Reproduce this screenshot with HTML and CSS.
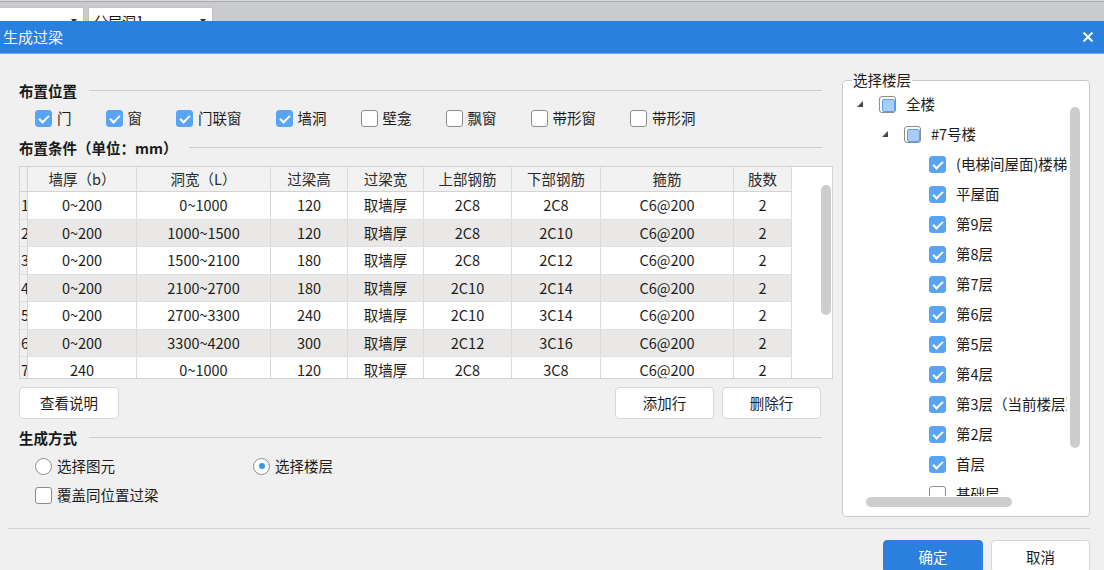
FILE: index.html
```html
<!DOCTYPE html>
<html lang="zh-CN">
<head>
<meta charset="utf-8">
<title>生成过梁</title>
<link rel="stylesheet" href="styles.css">
</head>
<body>
<div class="screen">
  <div class="topstrip">
    <div class="combo combo-a"><span class="combo-text"></span><span class="arrow"></span></div>
    <div class="combo combo-b"><span class="combo-text">分层洞1</span><span class="arrow"></span></div>
  </div>

  <div class="titlebar">
    <span class="title">生成过梁</span>
    <svg class="close" width="12" height="12" viewBox="0 0 12 12"><path d="M1.5 1.5L10.5 10.5M10.5 1.5L1.5 10.5" stroke="#fff" stroke-width="2" fill="none"/></svg>
  </div>

  <div class="content">
    <div class="left">
      <div class="section-head"><span class="section-title">布置位置</span><span class="rule"></span></div>
      <div class="check-row">
        <label class="opt"><span class="box checked"></span>门</label>
        <label class="opt"><span class="box checked"></span>窗</label>
        <label class="opt"><span class="box checked"></span>门联窗</label>
        <label class="opt"><span class="box checked"></span>墙洞</label>
        <label class="opt"><span class="box"></span>壁龛</label>
        <label class="opt"><span class="box"></span>飘窗</label>
        <label class="opt"><span class="box"></span>带形窗</label>
        <label class="opt"><span class="box"></span>带形洞</label>
      </div>

      <div class="section-head head-cond"><span class="section-title">布置条件（单位：mm）</span><span class="rule"></span></div>

      <div class="grid">
        <table class="data">
          <colgroup>
            <col class="c-num"><col class="c-b"><col class="c-l"><col class="c-h"><col class="c-w"><col class="c-top"><col class="c-bot"><col class="c-stir"><col class="c-legs">
          </colgroup>
          <thead>
            <tr><th class="num"></th><th>墙厚（b）</th><th>洞宽（L）</th><th>过梁高</th><th>过梁宽</th><th>上部钢筋</th><th>下部钢筋</th><th>箍筋</th><th>肢数</th></tr>
          </thead>
          <tbody>
            <tr><td class="num">1</td><td>0~200</td><td>0~1000</td><td>120</td><td>取墙厚</td><td>2C8</td><td>2C8</td><td>C6@200</td><td>2</td></tr>
            <tr class="alt"><td class="num">2</td><td>0~200</td><td>1000~1500</td><td>120</td><td>取墙厚</td><td>2C8</td><td>2C10</td><td>C6@200</td><td>2</td></tr>
            <tr><td class="num">3</td><td>0~200</td><td>1500~2100</td><td>180</td><td>取墙厚</td><td>2C8</td><td>2C12</td><td>C6@200</td><td>2</td></tr>
            <tr class="alt"><td class="num">4</td><td>0~200</td><td>2100~2700</td><td>180</td><td>取墙厚</td><td>2C10</td><td>2C14</td><td>C6@200</td><td>2</td></tr>
            <tr><td class="num">5</td><td>0~200</td><td>2700~3300</td><td>240</td><td>取墙厚</td><td>2C10</td><td>3C14</td><td>C6@200</td><td>2</td></tr>
            <tr class="alt"><td class="num">6</td><td>0~200</td><td>3300~4200</td><td>300</td><td>取墙厚</td><td>2C12</td><td>3C16</td><td>C6@200</td><td>2</td></tr>
            <tr><td class="num">7</td><td>240</td><td>0~1000</td><td>120</td><td>取墙厚</td><td>2C8</td><td>3C8</td><td>C6@200</td><td>2</td></tr>
          </tbody>
        </table>
        <div class="grid-side"><div class="vthumb"></div></div>
      </div>

      <div class="btn-row">
        <button class="btn">查看说明</button>
        <span class="spacer"></span>
        <button class="btn">添加行</button>
        <button class="btn">删除行</button>
      </div>

      <div class="section-head head-gen"><span class="section-title">生成方式</span><span class="rule"></span></div>
      <div class="radio-row">
        <label class="opt"><span class="radio"></span>选择图元</label>
        <label class="opt"><span class="radio on"></span>选择楼层</label>
      </div>
      <div class="over-row">
        <label class="opt"><span class="box"></span>覆盖同位置过梁</label>
      </div>
    </div>

    <fieldset class="floors">
      <legend>选择楼层</legend>
      <div class="tree-view">
        <ul class="tree-list">
          <li class="node lv0"><span class="twisty"></span><span class="box partial"></span><span class="node-text">全楼</span></li>
          <li class="node lv1"><span class="twisty"></span><span class="box partial"></span><span class="node-text">#7号楼</span></li>
          <li class="node lv2"><span class="twisty none"></span><span class="box checked"></span><span class="node-text">(电梯间屋面)楼梯</span></li>
          <li class="node lv2"><span class="twisty none"></span><span class="box checked"></span><span class="node-text">平屋面</span></li>
          <li class="node lv2"><span class="twisty none"></span><span class="box checked"></span><span class="node-text">第9层</span></li>
          <li class="node lv2"><span class="twisty none"></span><span class="box checked"></span><span class="node-text">第8层</span></li>
          <li class="node lv2"><span class="twisty none"></span><span class="box checked"></span><span class="node-text">第7层</span></li>
          <li class="node lv2"><span class="twisty none"></span><span class="box checked"></span><span class="node-text">第6层</span></li>
          <li class="node lv2"><span class="twisty none"></span><span class="box checked"></span><span class="node-text">第5层</span></li>
          <li class="node lv2"><span class="twisty none"></span><span class="box checked"></span><span class="node-text">第4层</span></li>
          <li class="node lv2"><span class="twisty none"></span><span class="box checked"></span><span class="node-text">第3层（当前楼层）</span></li>
          <li class="node lv2"><span class="twisty none"></span><span class="box checked"></span><span class="node-text">第2层</span></li>
          <li class="node lv2"><span class="twisty none"></span><span class="box checked"></span><span class="node-text">首层</span></li>
          <li class="node lv2"><span class="twisty none"></span><span class="box"></span><span class="node-text">基础层</span></li>
        </ul>
        <div class="vbar"></div>
        <div class="hbar"></div>
      </div>
    </fieldset>
  </div>

  <div class="footer">
    <button class="btn primary">确定</button>
    <button class="btn">取消</button>
  </div>
</div>
</body>
</html>
```

FILE: styles.css
```css
* { box-sizing: border-box; }

html, body {
  margin: 0;
  padding: 0;
}

body {
  width: 1104px;
  height: 570px;
  overflow: hidden;
  background: #f0f0f0;
  font-family: "Noto Sans CJK SC", "Noto Sans", sans-serif;
  font-size: 14.5px;
  color: #1c1c1c;
}

.screen {
  width: 1104px;
  height: 570px;
  display: flex;
  flex-direction: column;
  overflow: hidden;
}

/* ---------- top strip (app behind the dialog) ---------- */
.topstrip {
  height: 21px;
  flex: none;
  background: #c9cbce;
  border-top: 1px solid #dcdcdc;
  box-shadow: inset 0 1px 0 #a6a8ab;
  display: flex;
  gap: 4px;
  padding-top: 6px;
  overflow: hidden;
}

.combo {
  height: 24px;
  background: #fff;
  border: 1px solid #c2c2c2;
  display: flex;
  align-items: flex-start;
  padding: 0 6px 0 5px;
  line-height: 18px;
  font-size: 14px;
  color: #111;
}

.combo-a { width: 86px; margin-left: -2px; }
.combo-b { width: 125px; }

.combo-text { flex: 1; padding-top: 4px; }

.arrow {
  width: 0;
  height: 0;
  margin-top: 11px;
  border-left: 3px solid transparent;
  border-right: 3px solid transparent;
  border-top: 4px solid #333;
}

/* ---------- title bar ---------- */
.titlebar {
  height: 33px;
  flex: none;
  background: #2b7fdf;
  border-bottom: 1px solid #6aa7ee;
  display: flex;
  align-items: center;
  padding: 0 10px 0 3px;
}

.title {
  flex: 1;
  color: #eef4fc;
  font-size: 15px;
  line-height: 20px;
}

.close { display: block; }

/* ---------- content ---------- */
.content {
  height: 474px;
  flex: none;
  display: flex;
  gap: 9px;
  padding-left: 19px;
}

.left {
  width: 814px;
  display: flex;
  flex-direction: column;
}

.section-head {
  display: flex;
  align-items: center;
  height: 20px;
  margin-top: 27px;
  padding-right: 11px;
}

.section-title {
  font-weight: bold;
  font-size: 14.5px;
  line-height: 20px;
  color: #1a1a1a;
  white-space: nowrap;
}

.rule {
  flex: 1;
  height: 1px;
  margin-left: 12px;
  margin-top: -2px;
  background: #cdcdcd;
}

.head-cond { margin-top: 10px; }
.head-gen { margin-top: 9px; }

.opt {
  display: inline-flex;
  align-items: center;
  gap: 5px;
  line-height: 20px;
  white-space: nowrap;
}

.check-row {
  display: flex;
  gap: 34px;
  height: 20px;
  margin-top: 7px;
  padding-left: 16px;
}

/* checkboxes */
.box {
  width: 17px;
  height: 17px;
  flex: none;
  border: 1px solid #8d8d8d;
  border-radius: 3px;
  background: #fff;
  position: relative;
}

.box.checked {
  background: #59a4f4;
  border-color: #59a4f4;
}

.box.checked::after {
  content: "";
  position: absolute;
  left: 5px;
  top: 2px;
  width: 4px;
  height: 8px;
  border-right: 2px solid #fff;
  border-bottom: 2px solid #fff;
  transform: rotate(45deg);
}

.box.partial::after {
  content: "";
  position: absolute;
  left: 2px;
  top: 2px;
  width: 11px;
  height: 11px;
  border: 1px solid #5d9ff0;
  border-radius: 2px;
  background: #a7cdf8;
}

/* radio */
.radio {
  width: 17px;
  height: 17px;
  flex: none;
  border: 1px solid #8d8d8d;
  border-radius: 50%;
  background: #fff;
  position: relative;
}

.radio.on::after {
  content: "";
  position: absolute;
  left: 4.5px;
  top: 4.5px;
  width: 6px;
  height: 6px;
  border-radius: 50%;
  background: #3e92f0;
}

/* ---------- grid ---------- */
.grid {
  margin-top: 8px;
  height: 213px;
  width: 814px;
  display: flex;
  border: 1px solid #d3d3d3;
  background: #fff;
  overflow: hidden;
}

.data {
  table-layout: fixed;
  width: 772px;
  flex: none;
  border-collapse: separate;
  border-spacing: 0;
  font-size: 14.5px;
}

.c-num { width: 8px; }
.c-b { width: 109px; }
.c-l { width: 134px; }
.c-h { width: 77px; }
.c-w { width: 76px; }
.c-top { width: 88px; }
.c-bot { width: 89px; }
.c-stir { width: 133px; }
.c-legs { width: 58px; }

.data th,
.data td {
  padding: 0;
  text-align: center;
  white-space: nowrap;
  overflow: hidden;
  border-right: 1px solid #dadada;
  border-bottom: 1px solid #e0e0e0;
  line-height: 20px;
}

.data thead tr { height: 25px; }
.data th {
  font-weight: normal;
  background: #f2f2f2;
  color: #2a2a2a;
  border-bottom-color: #d3d3d3;
}

.data tbody tr { height: 27.5px; }
.data tbody tr.alt td { background: #e9e8e6; }

.data .num,
.data tbody tr.alt td.num {
  background: #f0f0f0;
  text-align: left;
  padding-left: 1px;
  border-right-color: #d3d3d3;
}

.grid-side {
  flex: 1;
  padding: 18px 0 0 29px;
}

.vthumb {
  width: 10px;
  height: 130px;
  border-radius: 5px;
  background: #cdcdcd;
}

/* ---------- buttons ---------- */
.btn-row {
  display: flex;
  gap: 8px;
  margin-top: 8px;
  padding-right: 12px;
}

.spacer { flex: 1; }

.btn {
  width: 100px;
  height: 32px;
  border: 1px solid #d6d6d6;
  border-radius: 4px;
  background: #fff;
  font-family: inherit;
  font-size: 14.5px;
  color: #1c1c1c;
  padding: 0;
  line-height: 20px;
}

.btn-row .btn + .btn,
.btn-row .spacer + .btn { width: 99px; }

.btn.primary {
  background: #2b7fdf;
  border-color: #2b7fdf;
  color: #fff;
}

.radio-row {
  display: grid;
  grid-template-columns: 218px auto;
  height: 20px;
  margin-top: 8px;
  padding-left: 16px;
}

.over-row {
  height: 20px;
  margin-top: 9px;
  padding-left: 16px;
}

/* ---------- floors fieldset ---------- */
.floors {
  width: 248px;
  height: 446px;
  margin: 17px 0 0 0;
  padding: 0;
  border: 1px solid #c7c7c7;
  border-radius: 4px;
  background: #fff;
  min-width: 0;
}

.floors legend {
  margin-left: 9px;
  padding: 0 1px;
  font-size: 14.5px;
  line-height: 18px;
  color: #1c1c1c;
}

.tree-view {
  position: relative;
  height: 427px;
}

.tree-list {
  list-style: none;
  margin: 0;
  padding: 0;
  width: 224px;
  height: 407px;
  overflow: hidden;
}

.node {
  height: 30px;
  display: flex;
  align-items: center;
  padding-left: 14px;
  white-space: nowrap;
}

.node.lv1 { padding-left: 39px; }
.node.lv2 { padding-left: 64px; }

.twisty {
  width: 22px;
  flex: none;
  height: 6px;
  position: relative;
}

.twisty::before {
  content: "";
  position: absolute;
  left: 0;
  top: 0;
  width: 0;
  height: 0;
  border-left: 6px solid transparent;
  border-bottom: 6px solid #4a4a4a;
}

.twisty.none::before { display: none; }

.node-text {
  margin-left: 10px;
  line-height: 20px;
}

.vbar {
  position: absolute;
  left: 227px;
  top: 18px;
  width: 10px;
  height: 341px;
  border-radius: 5px;
  background: #cdcdcd;
}

.hbar {
  position: absolute;
  left: 23px;
  top: 408px;
  width: 146px;
  height: 10px;
  border-radius: 5px;
  background: #cdcdcd;
}

/* ---------- footer ---------- */
.footer {
  flex: none;
  margin: 0 14px 0 8px;
  border-top: 1px solid #d3d3d3;
  padding-top: 11px;
  display: flex;
  justify-content: flex-end;
  gap: 8px;
}

.footer .btn { width: 100px; height: 33px; }
.footer .btn + .btn { width: 99px; }
```
